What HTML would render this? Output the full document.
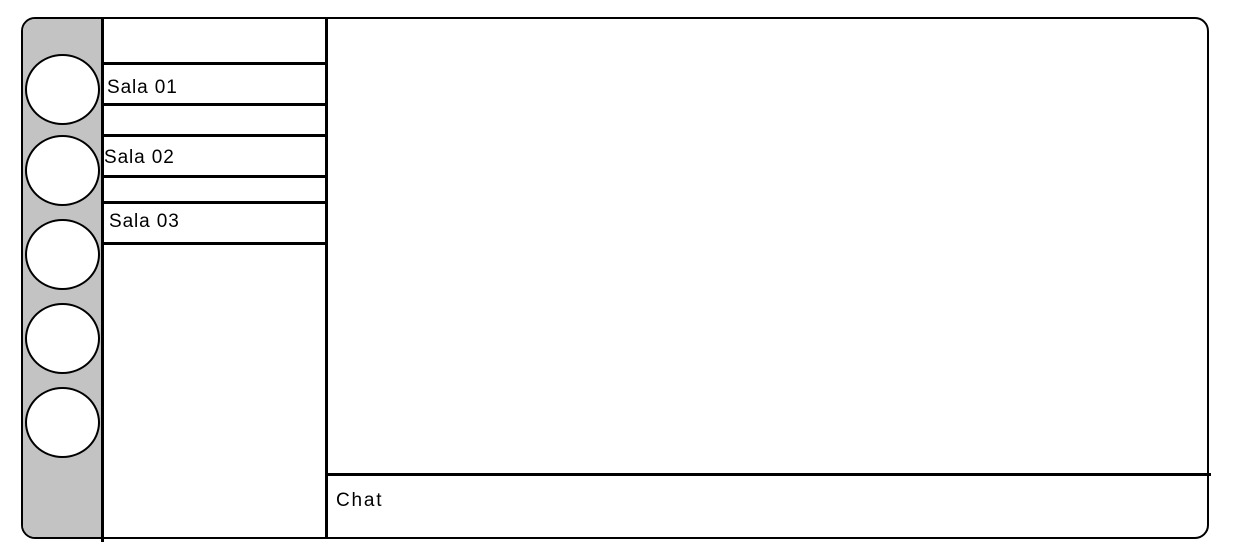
<!DOCTYPE html>
<html><head><style>
body{margin:0;width:1237px;height:553px;background:#fff;position:relative;overflow:hidden;font-family:"Liberation Sans",sans-serif;}
div{position:absolute;box-sizing:border-box;}
.box{left:21px;top:17px;width:1188px;height:522px;border:2.5px solid #000;border-radius:14px;overflow:hidden;}
.side{left:0;top:0;width:81px;height:100%;background:#c3c3c3;}
.v{background:#000;width:2.5px;}
.h{background:#000;height:2.5px;}
.c{width:75px;height:71px;border:2.5px solid #000;border-radius:50%;background:#fff;left:25px;}
.t{font-size:19px;color:#000;line-height:20px;letter-spacing:0.9px;}
</style></head><body>
<div class="box"><div class="side"></div></div>
<div class="v" style="left:101px;top:18px;height:524px"></div>
<div class="v" style="left:325px;top:18px;height:520px"></div>
<div class="h" style="left:326px;top:473px;width:885px"></div>
<div class="h" style="left:102px;top:62px;width:224px"></div>
<div class="h" style="left:102px;top:103px;width:224px"></div>
<div class="h" style="left:102px;top:134px;width:224px"></div>
<div class="h" style="left:102px;top:175px;width:224px"></div>
<div class="h" style="left:102px;top:201px;width:224px"></div>
<div class="h" style="left:102px;top:242px;width:224px"></div>
<div class="c" style="top:54px"></div>
<div class="c" style="top:135px"></div>
<div class="c" style="top:219px"></div>
<div class="c" style="top:303px"></div>
<div class="c" style="top:387px"></div>
<div class="t" style="left:107px;top:78px">Sala 01</div>
<div class="t" style="left:104px;top:148px">Sala 02</div>
<div class="t" style="left:109px;top:212px">Sala 03</div>
<div class="t" style="left:336px;top:491px;letter-spacing:1.8px">Chat</div>
</body></html>
